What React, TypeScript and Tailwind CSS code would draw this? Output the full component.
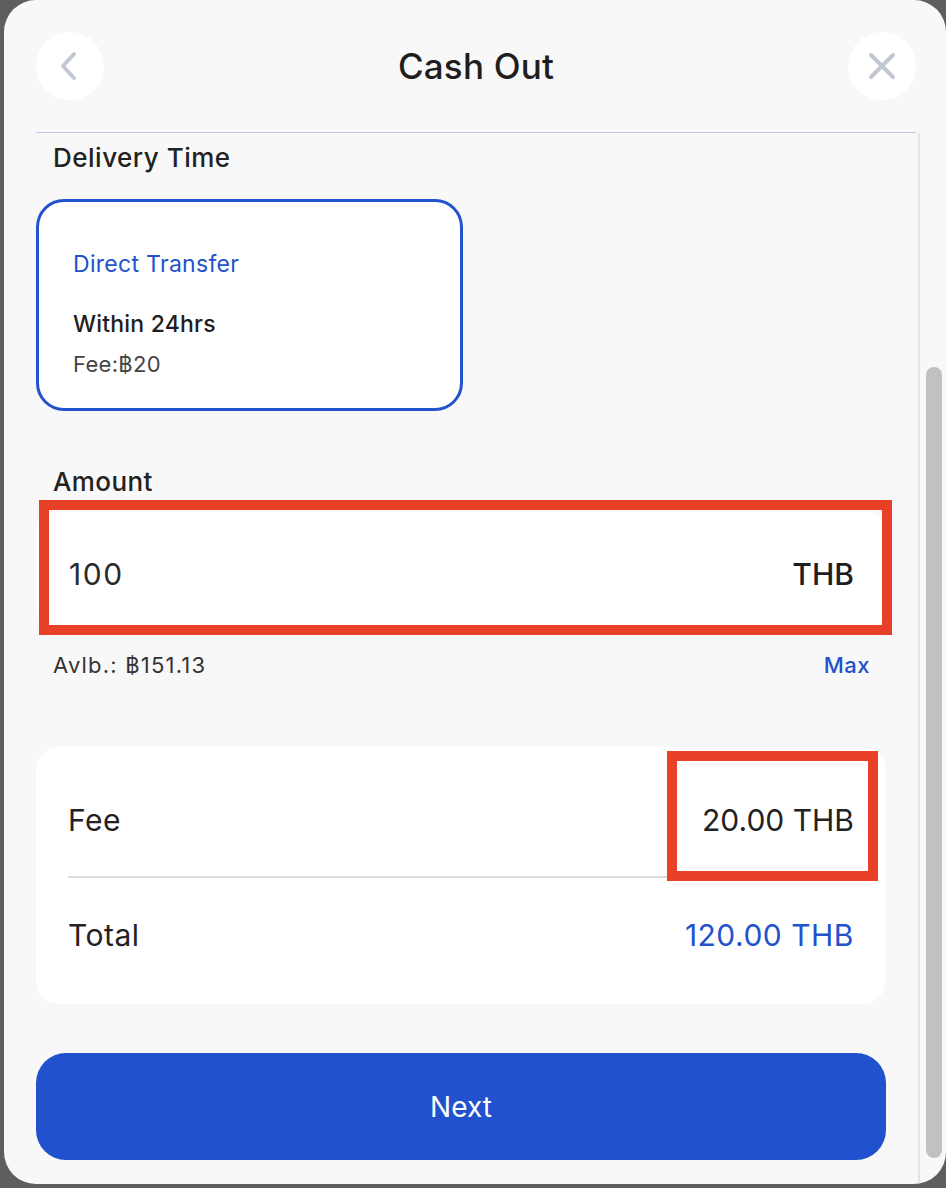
import React from "react";

const font = { fontFamily: "Inter, 'Noto Sans', sans-serif" };

function ChevronLeft() {
  return (
    <svg width="22" height="32" viewBox="0 0 22 32" fill="none" stroke="#c2c8d2" strokeWidth="4" strokeLinecap="round" strokeLinejoin="round">
      <path d="M16 4 L5 16 L16 28" />
    </svg>
  );
}

function XIcon() {
  return (
    <svg width="30" height="30" viewBox="0 0 30 30" fill="none" stroke="#c2c8d2" strokeWidth="4" strokeLinecap="round">
      <path d="M4 4 L26 26 M26 4 L4 26" />
    </svg>
  );
}

export default function App() {
  return (
    <div className="w-[946px] h-[1188px] bg-[#5e5e5e] pl-[4px] pb-[4px] flex" style={font}>
      <div className="flex-1 bg-[#f8f8f8] rounded-[32px] flex flex-col overflow-hidden">
        {/* Header */}
        <div className="ml-[32px] mr-[30px] h-[133px] pt-[32px] border-b border-[#bcc6dc] flex items-start justify-between shrink-0">
          <button className="w-[68px] h-[68px] rounded-full bg-white flex items-center justify-center pr-[2px]">
            <ChevronLeft />
          </button>
          <div className="text-[35px] font-medium text-[#1e1e1e] leading-[68px] tracking-[0.2px]">Cash Out</div>
          <button className="w-[68px] h-[68px] rounded-full bg-white flex items-center justify-center">
            <XIcon />
          </button>
        </div>
        {/* Body */}
        <div className="flex flex-1 min-h-0">
          <div className="flex-1 pl-[32px] pr-[32px] flex flex-col">
            <div className="pl-[17px] pt-[9px] text-[26px] font-medium text-[#222] leading-[32px] tracking-[0.5px]">Delivery Time</div>
            <div className="mt-[25px] w-[427px] h-[212px] rounded-[28px] border-[3px] border-[#2252cc] bg-white pl-[34px] pt-[47px] flex flex-col">
              <div className="text-[23px] text-[#2252cc] leading-[30px] tracking-[0.3px]">Direct Transfer</div>
              <div className="mt-[30px] text-[23px] font-medium text-[#1e1e1e] leading-[30px] tracking-[0.2px]">Within 24hrs</div>
              <div className="mt-[11px] text-[22px] text-[#444] leading-[28px] tracking-[0.3px]">Fee:฿20</div>
            </div>
            <div className="mt-[55px] pl-[17px] text-[26px] font-medium text-[#222] leading-[32px] tracking-[0.4px]">Amount</div>
            <div className="relative mt-[2px]">
              <div className="h-[116px] mt-[12px] mb-[8px] rounded-[20px] bg-white flex items-center justify-between pl-[33px] pr-[32px] pt-[8px]">
                <span className="text-[30px] text-[#2a2a2a] tracking-[1.5px]">100</span>
                <span className="text-[30px] font-medium text-[#1e1e1e]">THB</span>
              </div>
              <div className="absolute left-[3px] top-0 w-[853px] h-[135px] border-[10px] border-[#e84128]" />
            </div>
            <div className="mt-[15px] pl-[17px] pr-[16px] flex justify-between items-center text-[22px] leading-[28px]">
              <span className="text-[#333] tracking-[1.2px]">Avlb.: ฿151.13</span>
              <span className="text-[#2252cc] font-medium tracking-[0.5px]">Max</span>
            </div>
            <div className="mt-[68px] rounded-[24px] bg-white h-[257px] px-[32px] flex flex-col">
              <div className="relative h-[131px] pt-[18px] flex items-center justify-between border-b-2 border-[#dcdcdc]">
                <span className="text-[30px] text-[#222] tracking-[0.5px]">Fee</span>
                <span className="text-[30px] text-[#222]">20.00 THB</span>
                <div className="absolute right-[-24px] top-[4px] w-[211px] h-[130px] border-[10px] border-[#e84128]" />
              </div>
              <div className="flex-1 flex items-center justify-between pb-[12px]">
                <span className="text-[30px] text-[#222] tracking-[0.5px]">Total</span>
                <span className="text-[30px] text-[#2252cc] tracking-[0.5px]">120.00 THB</span>
              </div>
            </div>
            <button className="mt-[49px] h-[107px] rounded-[30px] bg-[#2151cc] text-white text-[28px] flex items-center justify-center">Next</button>
          </div>
          {/* Scrollbar */}
          <div className="w-[28px] border-l-2 border-[#e4e4e4] pl-[6px] pr-[4px] pt-[234px] pb-[26px] flex">
            <div className="w-[16px] flex-1 rounded-full bg-[#c1c1c1]" />
          </div>
        </div>
      </div>
    </div>
  );
}
